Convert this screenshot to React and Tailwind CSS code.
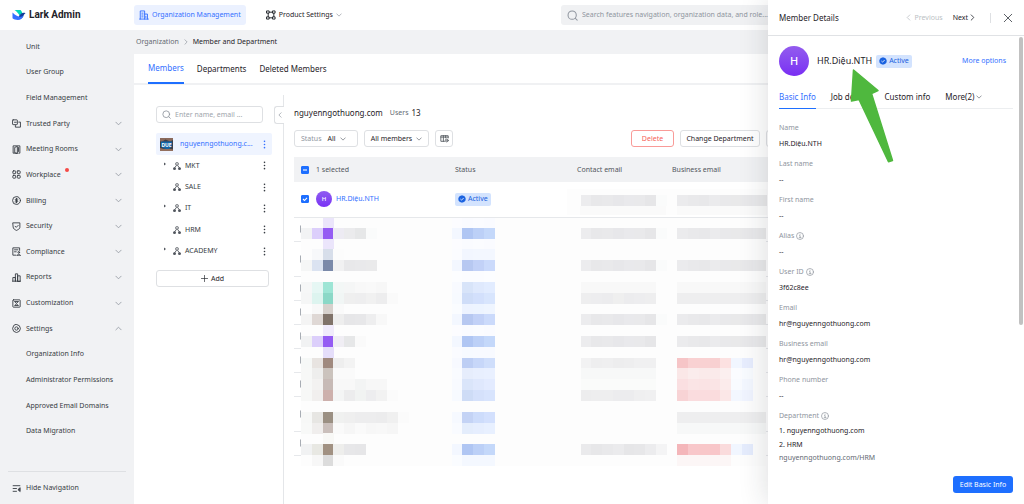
import React from "react";

const font = "font-['Noto_Sans','Liberation_Sans',sans-serif]";

/* ---------- icons ---------- */

function Icon({ children, className = "size-[9px]", width = 1.2 }) {
  return (
    <svg viewBox="0 0 16 16" fill="none" stroke="currentColor" strokeWidth={width} strokeLinecap="round" strokeLinejoin="round" className={"shrink-0 " + className} aria-hidden="true">
      {children}
    </svg>
  );
}

const Chevron = ({ up, className = "size-[7px]", width = 1.8 }) => (
  <Icon className={className} width={width}>
    <path d={up ? "M2 11l6-6 6 6" : "M2 5l6 6 6-6"} />
  </Icon>
);

const Side = ({ left, className = "size-[7px]", width = 1.8 }) => (
  <Icon className={className} width={width}>
    <path d={left ? "M11 2L5 8l6 6" : "M5 2l6 6-6 6"} />
  </Icon>
);

const TrustedIcon = () => (
  <Icon width={1.6}>
    <rect x="1" y="1.5" width="8.5" height="8.5" rx="1" />
    <path d="M12 5.5h3v9H6v-3M4.500 5.800h3" />
  </Icon>
);
const RoomsIcon = () => (
  <Icon width={1.6}>
    <path d="M9 14.500H2v-13h12v13h-2M5.500 4l4-1.500v13l-4-1.500zM11.500 4.500v7" />
  </Icon>
);
const WorkplaceIcon = () => (
  <Icon width={1.6}>
    <rect x="1.500" y="1.500" width="5" height="5" rx="1" />
    <rect x="9.500" y="1.500" width="5" height="5" rx="1" />
    <rect x="1.500" y="9.500" width="5" height="5" rx="1" />
    <rect x="9.500" y="9.500" width="5" height="5" rx="1" />
  </Icon>
);
const BillingIcon = () => (
  <Icon width={1.6}>
    <circle cx="8" cy="8" r="7" />
    <path d="M10.500 5.500H7a1.250 1.250 0 000 2.500h2a1.250 1.250 0 010 2.500H5.500M8 4v8" />
  </Icon>
);
const SecurityIcon = () => (
  <Icon width={1.6}>
    <path d="M2 1.500h12v8c0 2.500-3 4-6 5.500-3-1.500-6-3-6-5.500zM5.500 7.500l2 2 3.500-3.500" />
  </Icon>
);
const ComplianceIcon = () => (
  <Icon width={1.6}>
    <path d="M7 14.500H1.500v-13h12V6M4.500 5h6M4.500 8.500h3" />
    <circle cx="12" cy="9.500" r="1.500" />
    <path d="M9 15c0-3 6-3 6 0z" />
  </Icon>
);
const ReportsIcon = () => (
  <Icon width={1.6}>
    <path d="M1.500 14.500V8H6v6.500M6 14.500v-13h4v13M10 14.500V5h4.500v9.500zM1 14.500h14" />
  </Icon>
);
const CustomizationIcon = () => (
  <Icon width={1.6}>
    <rect x="1.500" y="1.500" width="13" height="13" rx="1" />
    <path d="M5 5l3 2.500L11 5M5 4.500h6M5 11.500h6M5.500 11L8 8.500l2.500 2.500" />
  </Icon>
);
const SettingsIcon = () => (
  <Icon width={1.6}>
    <path d="M8 .8l5 2.200 2 5-2 5-5 2.200L3 13 1 8l2-5z" />
    <circle cx="8" cy="8" r="3" />
  </Icon>
);
const OrgBuildingIcon = () => (
  <Icon className="size-[10px]" width={1.5}>
    <path d="M2 14.500v-13h7v13M9 6.500h4.500v8M1 14.500h14M4.500 5h2M4.500 8h2M4.500 11h2M11 10v2" />
  </Icon>
);
const ProductIcon = () => (
  <Icon className="size-[10px]" width={1.5}>
    <path d="M5.500 3.500h5M5.500 12.500h5M3.500 5.500v5M12.500 5.500v5" />
    <rect x="1.500" y="1.500" width="3.500" height="3.500" /><rect x="11" y="1.500" width="3.500" height="3.500" />
    <rect x="1.500" y="11" width="3.500" height="3.500" /><rect x="11" y="11" width="3.500" height="3.500" />
  </Icon>
);
const SearchIcon = ({ className }) => (
  <Icon className={className} width={1.5}>
    <circle cx="7.500" cy="7.500" r="6" />
    <path d="M12 12l2.800 2.800" />
  </Icon>
);
const TreeIcon = () => (
  <svg viewBox="0 0 16 16" className="size-[8px] shrink-0 text-[#51565d]" fill="none" stroke="currentColor" strokeWidth="1.800" aria-hidden="true">
    <rect x="5.500" y="1.500" width="5" height="4.500" rx="1" />
    <path d="M7 6.500l-3.500 5M9 6.500l3.500 5" />
    <rect x="1" y="11.500" width="4" height="3.500" rx="1" fill="currentColor" />
    <rect x="11" y="11.500" width="4" height="3.500" rx="1" fill="currentColor" />
  </svg>
);
const DotsIcon = () => (
  <svg viewBox="0 0 4 12" className="h-[9px] w-[3px]" fill="currentColor" aria-hidden="true">
    <circle cx="2" cy="1.800" r="1.100" /><circle cx="2" cy="6" r="1.100" /><circle cx="2" cy="10.200" r="1.100" />
  </svg>
);
const InfoIcon = () => (
  <Icon className="size-[8px]" width={1.400}>
    <circle cx="8" cy="8" r="7" />
    <path d="M7 7.200h1.300V11M6.500 11.300h3.500M8 4.500v.2" />
  </Icon>
);
const LarkLogo = () => (
  <svg viewBox="0 0 28 24" className="h-[12px] w-[14px] shrink-0" aria-hidden="true">
    <path d="M5 2h12c2 2 3.500 4.500 4 7l-6 4C13 9 9 4.500 5 2z" fill="#00d6b9" />
    <path d="M27 8.500c-4-2-8-.5-11 3l-3 3.500 6 4c3-2 4-6 5.500-8.500z" fill="#133c9a" />
    <path d="M1 7c5 5 11 9 17 8.500 2-.2 4-1 5.500-2.500-2 5-6 9-12 9-4 0-8-1.500-10.500-3.500z" fill="#3370ff" />
  </svg>
);

/* ---------- navigation ---------- */

const navItems = [
  { label: "Unit" },
  { label: "User Group" },
  { label: "Field Management" },
  { label: "Trusted Party", icon: TrustedIcon },
  { label: "Meeting Rooms", icon: RoomsIcon },
  { label: "Workplace", icon: WorkplaceIcon, dot: true },
  { label: "Billing", icon: BillingIcon },
  { label: "Security", icon: SecurityIcon },
  { label: "Compliance", icon: ComplianceIcon },
  { label: "Reports", icon: ReportsIcon },
  { label: "Customization", icon: CustomizationIcon },
  { label: "Settings", icon: SettingsIcon, open: true },
  { label: "Organization Info" },
  { label: "Administrator Permissions" },
  { label: "Approved Email Domains" },
  { label: "Data Migration" },
];

function Sidebar() {
  return (
    <aside className="flex w-[134px] shrink-0 flex-col bg-[#f1f2f4] text-[#373c43]">
      <nav className="flex flex-1 flex-col pt-1 pb-[27px]">
        {navItems.map(({ label, icon: I, dot, open }) =>
          I ? (
            <button key={label} type="button" aria-expanded={!!open} className="flex max-h-[26px] flex-1 items-center gap-[5px] pr-3 pl-3 text-left">
              <I />
              <span className="relative">
                {label}
                {dot && <i className="absolute -top-px -right-[8px] size-[4px] rounded-full bg-[#f54a45]" />}
              </span>
              <span className="ml-auto text-[#8f959e]"><Chevron up={open} /></span>
            </button>
          ) : (
            <a key={label} href="#" className="flex max-h-[26px] flex-1 items-center pl-[26px]">{label}</a>
          )
        )}
      </nav>
      <div className="mx-2 border-t border-[#dee0e3]" />
      <button type="button" className="flex h-8 items-center gap-[5px] pl-3 text-left">
        <Icon width={1.600}><path d="M2 3h12M2 8h6M2 13h6" /><path d="M14 7l-3.500 3 3.500 3z" fill="currentColor" /></Icon>
        Hide Navigation
      </button>
    </aside>
  );
}

function TopBar() {
  return (
    <header className="flex h-[30px] shrink-0 items-center bg-white">
      <a href="#" className="flex w-[134px] shrink-0 items-center gap-[3px] pl-3 font-['Roboto','Liberation_Sans',sans-serif] text-[10px] font-bold text-[#1f2329]">
        <LarkLogo />
        Lark Admin
      </a>
      <button type="button" className="flex h-5 items-center gap-[3px] rounded-[3px] bg-[#ebf1ff] px-[5px] text-[#3370ff]">
        <OrgBuildingIcon />
        Organization Management
      </button>
      <button type="button" className="ml-5 flex items-center gap-[3px] text-[#1f2329]">
        <ProductIcon />
        Product Settings
        <span className="text-[#8f959e]"><Chevron className="size-[6px]" /></span>
      </button>
      <label className="ml-auto flex h-5 w-[300px] items-center gap-1 rounded-[3px] bg-[#f0f1f3] px-[6px] text-[#8f959e] mr-[163px]">
        <SearchIcon className="size-[11px]" />
        <input aria-label="Search" className="w-full bg-transparent outline-none placeholder:text-[#8f959e]" placeholder="Search features navigation, organization data, and role..." />
      </label>
    </header>
  );
}

/* ---------- department tree ---------- */

const departments = [
  { name: "MKT", nested: true },
  { name: "SALE" },
  { name: "IT", nested: true },
  { name: "HRM" },
  { name: "ACADEMY", nested: true },
];

function DepartmentTree() {
  return (
    <section className="relative mt-[10px] w-[150px] shrink-0 border-r border-[#e4e6e9] pt-[11px] pr-[11px] pl-[22px]">
      <label className="mr-[9px] flex h-[17px] items-center gap-1 rounded-[3px] border border-[#dee0e3] px-[5px] text-[#8f959e]">
        <SearchIcon className="size-[9px]" />
        <input aria-label="Search departments" className="w-full bg-transparent outline-none placeholder:text-[#a0a5ac]" placeholder="Enter name, email ..." />
      </label>
      <button type="button" aria-label="Collapse" className="absolute top-[11px] -right-px flex h-[18px] w-[10px] items-center justify-center rounded-l-[3px] border border-r-0 border-[#dee0e3] bg-white text-[#8f959e]">
        <Side left className="size-[6px]" />
      </button>
      <div className="mt-[10px] flex h-[22px] items-center rounded-[2px] bg-[#eff4ff] px-1 text-[#3370ff]">
        <svg viewBox="0 0 26 26" className="size-[13px] shrink-0" aria-hidden="true">
          <rect width="26" height="26" rx="2" fill="#3c3f4a" />
          <path d="M0 0h26v4l-6 3-9-4-8 5-3-2z" fill="#8a6a5c" />
          <path d="M0 20l8 2 9-1 9 2v3H0z" fill="#93705f" />
          <path d="M2 7h22v9c-3 5-6 6-11 6S5 20 2 16z" fill="#1265a8" />
          <text x="13" y="17" textAnchor="middle" fontSize="10" fontWeight="700" fill="#fff">DUE</text>
        </svg>
        <a href="#" className="ml-[7px]">nguyenngothuong.c...</a>
        <button type="button" aria-label="More" className="ml-auto pr-[2px]"><DotsIcon /></button>
      </div>
      <ul className="grid h-[107px] grid-rows-5">
        {departments.map((d) => (
          <li key={d.name} className="flex items-center pr-[6px] pl-2 text-[#373c43]">
            <svg viewBox="0 0 6 8" className="mb-1 h-[4px] w-[3px]" aria-hidden="true">
              {d.nested && <path d="M0 1l4 3-4 3z" fill="#51565d" />}
            </svg>
            <span className="ml-[6px] flex items-center gap-1"><TreeIcon />{d.name}</span>
            <button type="button" aria-label={d.name + " menu"} className="ml-auto"><DotsIcon /></button>
          </li>
        ))}
      </ul>
      <button type="button" className="mt-2 flex h-[17px] w-[113px] items-center justify-center gap-[3px] rounded-[3px] border border-[#dee0e3] text-[#1f2329]">
        <Icon className="size-[7px]" width={1.500}><path d="M8 1v14M1 8h14" /></Icon>
        Add
      </button>
    </section>
  );
}

/* ---------- member table ---------- */

const CELL = 10.75;
const LINE = 10.82;

const g = (n, c) => Array(n).fill(c);
const mail = ["#ececee", "#e8e8ea", "#e9e9eb", "#e7e7ea", "#e9e9ec", "#e9e9eb", "#e6e6e8", "#fafbfb"];
const mail2 = ["#ebebed", "#e9e9eb", "#e8e8ea", "#ebebed", "#e9e9eb", "#e9e9ea", "#e8e8ea", "#e9e9eb", "#e9e9ea"];
const blue = ["#f3f7ff", "#b0c6f3", "#bcd0f7", "#c4d8fa"];
const lavender = ["#f3f7ff", "#b7c8f1", "#c2d1f7", "#cbdafb"];
const paleBlue = ["#f8faff", "#d8e4f9", "#dfe9fd", "#e2ecff"];
const faint = ["#fbfcff", "#f2f6ff", "#f3f7ff", "#f3f7ff"];

/* [line, first column, colours] */
const mosaic = [
  [0, 2, ["#ebe5fb"]], [0, 14, ["#fcfcff", "#fafbff", "#fbfcff", "#fafbff"]],
  [1, 0, ["#f2f3f4", "#dccffb", "#955cf3", "#edebf3", "#ebebed", "#e6e7e8", "#fafbfb"]], [1, 14, blue], [1, 26, mail], [1, 35, mail2],
  [2, 2, ["#ebe5fb"]], [2, 14, ["#fcfcff", "#fafbff", "#fbfcff", "#fafbff"]],
  [3, 1, ["#f7f8fa", "#d7deea", "#fcfcfc"]], [3, 14, faint],
  [4, 0, ["#f5f6f6", "#dbe3f1", "#7a89a9", "#f1f1f2", "#e8e8ea", "#e9e9eb", "#eaeaeb"]], [4, 14, lavender], [4, 26, mail], [4, 35, mail2],
  [5, 14, ["#fcfdff", "#fbfcff", "#fbfcff", "#fcfdff"]],
  [6, 0, ["#f6f7f7", "#e6f7f4", "#9de5d5", "#f3f7f6", "#f5f6f6", "#f8f8f8", "#f9f9f9", "#f7f7f7"]], [6, 14, paleBlue], [6, 26, g(7, "#f8f8f8")], [6, 35, g(9, "#f8f8f8")],
  [7, 0, ["#f5f6f6", "#ddf4ef", "#8bd8c7", "#f1f6f5", "#efefef", "#eeeeef", "#f1f1f1", "#ededee", "#fafafa"]], [7, 14, ["#f7faff", "#cfddf8", "#d3e0fc", "#d8e5fd"]], [7, 26, ["#eeeeef", "#ededef", "#ececee", "#efefef", "#ececee", "#ededef", "#eeeeef"]], [7, 35, g(9, "#eeeeef")],
  [8, 1, ["#f8f8f8", "#d7d1cd", "#fafafa"]], [8, 14, ["#fafcff", "#edf3ff", "#edf4ff", "#eff5ff"]],
  [9, 0, ["#f4f4f4", "#dfd8d5", "#80736a", "#eeeeee", "#e6e6e8", "#e7e7e9", "#eeeeef", "#f8f8f8"]], [9, 14, lavender], [9, 26, mail], [9, 35, mail2],
  [10, 2, ["#f0ebfb"]], [10, 14, ["#fcfcff", "#fafbff", "#fbfcff", "#fafbff"]],
  [11, 0, ["#f1f2f3", "#dccffb", "#955cf3", "#f0eef4", "#e6e7e8", "#fafafa"]], [11, 14, blue], [11, 26, mail.slice(0, 7)], [11, 35, mail2],
  [12, 2, ["#e5defa"]], [12, 14, ["#fafbff", "#f7faff", "#f8faff", "#f8faff"]],
  [13, 0, ["#f6f8f7", "#e8e4e1", "#a08a7f", "#eeeeee", "#f3f3f3"]], [13, 14, ["#f7f9ff", "#bdcef4", "#c7d7f9", "#cfdefb"]], [13, 26, ["#f2f2f3", "#eeeeef", "#efeff0", "#ededee", "#eeeeef", "#f0f0f1", "#f0f0f1"]], [13, 35, ["#f6c5c7", "#f9d1d2", "#f9d1d2", "#f8d0d1", "#fce1e1", "#f1f6ff", "#e7edfe"]],
  [14, 0, ["#f7f8f7", "#eeeeed", "#cbc3bd", "#fafafa", "#fafafa"]], [14, 14, ["#f9fbff", "#e6edfc", "#e8effe", "#e9f0ff"]], [14, 26, g(7, "#f7f8f8")], [14, 35, ["#fae7e7", "#faecec", "#faeaea", "#faeaea", "#fbefef", "#fbfcff", "#f8fbff"]],
  [15, 0, ["#f7f8f7", "#f3f2f1", "#c7bab6", "#f8f8f8", "#f8f8f8", "#f3f4f4", "#f7f7f7", "#f7f7f7"]], [15, 14, ["#f8faff", "#dae5fa", "#dfe8fd", "#e3ebff"]], [15, 26, g(7, "#fafbfa")], [15, 35, ["#fadfe1", "#fae4e5", "#fae3e4", "#fae4e5", "#fbebeb", "#f9fbff", "#f3f7ff"]],
  [16, 0, ["#f7f8f7", "#f1efee", "#cdb0ac", "#f4f5f5", "#ececed", "#f1f3f2", "#ededef", "#f2f2f2", "#fbfbfb"]], [16, 14, ["#f7faff", "#cedcf6", "#d5e1fb", "#d8e4fd"]], [16, 26, ["#ededee", "#eeeeef", "#eeeeef", "#ececee", "#ececee", "#efeff0", "#f0f0f1"]], [16, 35, ["#f8d3d5", "#fadcde", "#fadcde", "#fadcdd", "#fbe7e7", "#f3f7ff", "#f0f4ff"]],
  [18, 0, ["#f7f8f7", "#e7e6e3", "#9b9083", "#f0f1f0", "#efefef", "#ededee", "#ededee", "#ececed", "#f0f0f0", "#fbfbfb"]], [18, 14, ["#f6f9ff", "#c4d3f5", "#cddcfb", "#d3e0fd"]], [18, 35, g(9, "#eeeeef")],
  [19, 0, ["#f8f9f8", "#f0eeed", "#cabfbb", "#fafafa", "#f6f6f6", "#fafafa", "#f7f7f7", "#f8f8f8", "#f6f6f6"]], [19, 14, ["#f9fbff", "#e4edfc", "#e6eefe", "#e8f0ff"]], [19, 35, g(9, "#f7f8f8")],
  [20, 2, ["#f8f8f6"]],
  [21, 0, ["#f1f2f3", "#e8e8e3", "#a19182", "#eeeeec", "#e7e7e9", "#e6e6e8"]], [21, 14, blue], [21, 26, ["#eaeaec", "#e7e7e9", "#e9e9eb", "#ebebed", "#e6e6e8", "#e7e7e9", "#ececee", "#f4f4f5"]], [21, 35, ["#f4b6ba", "#f8c7ca", "#f8c7c9", "#f8c6c9", "#fadbdc", "#f1f6ff", "#e5ecfd"]],
  [22, 1, ["#f7f7f7", "#dcdcdc", "#fafafa"]], [22, 14, ["#fafcff", "#f4f8ff", "#f4f8ff", "#f4f8ff"]], [22, 35, g(5, "#fcf6f6")],
];

function Mosaic() {
  return (
    <svg viewBox="0 1 465 248" width="465" height="248" className="absolute top-[61px] left-[7px]" shapeRendering="crispEdges" aria-hidden="true">
      <rect width="465" height="249" fill="#fdfdfd" />
      {mosaic.map(([line, col, colours]) =>
        colours.map((c, i) => (
          <rect key={line + "-" + (col + i)} x={(col + i) * CELL} y={line * LINE} width={CELL + 0.300} height={LINE + 0.200} fill={c} />
        ))
      )}
    </svg>
  );
}

function MailMosaic() {
  return (
    <svg viewBox="0 0 200 26" width="200" height="26" className="absolute top-[32px] left-[273px]" shapeRendering="crispEdges" aria-hidden="true">
      <rect width="200" height="26" fill="#fdfdfd" />
      {mail.map((c, i) => <rect key={i} x={13.500 + i * CELL} y="6" width="11" height="11" fill={c} />)}
      {mail2.map((c, i) => <rect key={i} x={110 + i * CELL} y="6" width="11" height="11" fill={c} />)}
      <path d="M13 17h86v9H13zM110 17h90v9h-90z" fill="#fafafa" />
    </svg>
  );
}

function Check({ label, mode }) {
  return (
    <span className="relative block size-[8px]">
      <input
        type="checkbox"
        aria-label={label}
        defaultChecked={!!mode}
        className="block size-[8px] appearance-none rounded-[1px] border border-[#a8adb4] bg-white checked:border-[#1e6fff] checked:bg-[#1e6fff]"
      />
      {mode && (
        <svg viewBox="0 0 8 8" className="pointer-events-none absolute inset-0 size-[8px]" fill="none" stroke="#fff" strokeWidth="1.100" aria-hidden="true">
          <path d={mode === "some" ? "M2 4h4" : "M2 4l1.500 1.500L6 2.800"} />
        </svg>
      )}
    </span>
  );
}

function ActiveBadge() {
  return (
    <span className="inline-flex h-[13px] items-center gap-[2px] rounded-[2px] bg-[#d3e3fe] px-[3px] text-[#1a62e0]">
      <svg viewBox="0 0 16 16" className="size-[8px] shrink-0" aria-hidden="true">
        <path d="M8 .5l2.200 1.200 2.500.1 1 2.300 1.800 1.900-.5 2 .5 2.400-1.900 1.600-1 2.200-2.500.1L8 15.500l-2.200-1.200-2.500-.1-1-2.200L.5 10.400 1 8 .5 6l1.800-1.900 1-2.300 2.500-.1z" fill="#1a62e0" />
        <path d="M4.800 8l2.300 2.300 4.200-4.300" fill="none" stroke="#fff" strokeWidth="1.600" />
      </svg>
      Active
    </span>
  );
}

const hiddenRows = ["h-6", "h-[35px]", "h-6", "h-6", "h-6", "h-6", "h-6", "h-[35px]", "h-6"];

function MemberTable() {
  return (
    <div className="relative mt-[10px]">
      <table className="w-full table-fixed border-collapse">
        <colgroup>
          <col className="w-[22px]" /><col className="w-[139px]" /><col className="w-[122px]" /><col className="w-[95px]" /><col className="w-[94px]" /><col />
        </colgroup>
        <thead>
          <tr className="h-[25px] bg-[#f1f2f4] text-left text-[#51565d]">
            <th className="p-0 pl-[7px] font-normal"><Check label="Select all" mode="some" /></th>
            <th className="p-0 font-normal">1 selected</th>
            <th className="p-0 font-normal">Status</th>
            <th className="p-0 font-normal">Contact email</th>
            <th className="p-0 font-normal">Business email</th>
            <th className="p-0 font-normal" />
          </tr>
        </thead>
        <tbody>
          <tr className="h-[35px] border-b border-[#e6e8eb]">
            <td className="p-0 pl-[7px]"><Check label="Select HR.Diệu.NTH" mode="all" /></td>
            <td className="p-0">
              <a href="#" className="flex items-center gap-1 text-[#3370ff]">
                <span className="flex size-4 items-center justify-center rounded-full bg-linear-to-b from-[#8f5bf0] to-[#7a2ff5] text-[6px] font-medium text-white">H</span>
                HR.Diệu.NTH
              </a>
            </td>
            <td className="p-0"><div className="flex"><ActiveBadge /></div></td>
            <td /><td /><td />
          </tr>
          {hiddenRows.map((h, i) => (
            <tr key={i} className={h + " border-b border-[#e6e8eb]"}>
              <td className="p-0 pl-[6px]"><Check label={"Select member " + (i + 2)} /></td>
              <td className="p-0" /><td className="p-0" /><td className="p-0" /><td className="p-0" /><td className="p-0" />
            </tr>
          ))}
        </tbody>
      </table>
      <MailMosaic />
      <Mosaic />
    </div>
  );
}

const outline = "flex h-[17px] items-center rounded-[3px] border border-[#dee0e3] bg-white";

function Members() {
  return (
    <section className="min-w-0 flex-1 pt-[22px] pl-[10px]">
      <div className="flex h-3 items-center">
        <h1 className="text-[8px] text-[#1f2329]">nguyenngothuong.com</h1>
        <span className="ml-[7px] text-[#646a73]">Users</span>
        <span className="ml-[3px] text-[8px] text-[#1f2329]">13</span>
      </div>
      <div className="mt-[11px] flex items-center gap-[6px] whitespace-nowrap text-[#1f2329]">
        <button type="button" className={outline + " w-[64px] px-[6px]"}>
          <span className="text-[#8f959e]">Status</span>
          <span className="mr-1 ml-[6px]">All</span>
          <Chevron className="size-[6px] text-[#646a73]" />
        </button>
        <button type="button" className={outline + " w-[65px] justify-center gap-1"}>
          All members
          <Chevron className="size-[6px] text-[#646a73]" />
        </button>
        <button type="button" aria-label="Columns" className={outline + " w-[18px] justify-center text-[#51565d]"}>
          <Icon className="size-[9px]" width={1.500}>
            <path d="M8 13H1.500V3h13v4M1.500 5.500h13M6 3v10M10 3v4" />
            <circle cx="12" cy="11.500" r="2.500" /><path d="M12 11.500h.1" />
          </Icon>
        </button>
        <button type="button" className="ml-auto flex h-[17px] w-[43px] items-center justify-center rounded-[3px] border border-[#f99b98] bg-white text-[#f65f5a]">Delete</button>
        <button type="button" className={outline + " w-[80px] justify-center"}>Change Department</button>
        <button type="button" aria-label="More actions" className={outline + " mr-[178px] w-[80px] justify-center"} />
      </div>
      <MemberTable />
    </section>
  );
}

/* ---------- member details ---------- */

const fields = [
  { label: "Name", value: "HR.Diệu.NTH" },
  { label: "Last name", value: "--" },
  { label: "First name", value: "--" },
  { label: "Alias", value: "--", info: true },
  { label: "User ID", value: "3f62c8ee", info: true },
  { label: "Email", value: "hr@nguyenngothuong.com" },
  { label: "Business email", value: "hr@nguyenngothuong.com" },
  { label: "Phone number", value: "--" },
];

function Details() {
  return (
    <aside className="absolute inset-y-0 right-0 flex w-[256px] flex-col bg-white text-[#1f2329] shadow-[0_0_28px_rgba(31,35,41,0.16)]">
      <header className="flex h-[36px] shrink-0 items-center border-b border-[#e0e2e5] pr-[11px] pl-[11px]">
        <h2 className="text-[8px]">Member Details</h2>
        <button type="button" disabled className="ml-auto flex items-center gap-[3px] text-[#bbbfc4]"><Side left /> Previous</button>
        <button type="button" className="ml-[10px] flex items-center gap-px">Next <Side /></button>
        <i className="ml-[14px] h-[10px] w-px bg-[#dee0e3]" />
        <button type="button" aria-label="Close" className="ml-3 text-[#51565d]">
          <Icon className="size-[10px]" width={1.500}><path d="M2 2l12 12M14 2L2 14" /></Icon>
        </button>
      </header>
      <div className="min-h-0 flex-1 overflow-hidden px-[11px]">
        <div className="mt-[10px] flex h-[30px] items-center">
          <span className="flex size-[30px] items-center justify-center rounded-full bg-linear-to-b from-[#935bee] to-[#7a2cf3] text-[11px] font-medium text-white">H</span>
          <h3 className="mr-1 ml-2 text-[9px]">HR.Diệu.NTH</h3>
          <ActiveBadge />
          <a href="#" className="mr-[7px] ml-auto text-[#3370ff]">More options</a>
        </div>
        <div role="tablist" className="mt-[10px] flex h-[23px] items-stretch gap-[15px] border-b border-[#eceef0] text-[8px] whitespace-nowrap">
          <button type="button" role="tab" aria-selected="true" className="-mb-px border-b border-[#1e6fff] text-[#3370ff]">Basic Info</button>
          <button type="button" role="tab" aria-selected="false">Job details</button>
          <button type="button" role="tab" aria-selected="false">Custom info</button>
          <button type="button" role="tab" aria-selected="false" className="flex items-center gap-[2px]">More(2) <Chevron className="size-[6px] text-[#646a73]" /></button>
        </div>
        <dl className="mt-[11px]">
          {fields.map((f) => (
            <div key={f.label} className="h-9">
              <dt className="flex h-4 items-center gap-[2px] text-[#8f959e]">{f.label}{f.info && <InfoIcon />}</dt>
              <dd className="h-4 leading-4">{f.value}</dd>
            </div>
          ))}
          <div>
            <dt className="flex h-4 items-center gap-[2px] text-[#8f959e]">Department<InfoIcon /></dt>
            <dd className="leading-[14px]">
              <div>1. nguyenngothuong.com</div>
              <div>2. HRM</div>
              <div className="leading-3 text-[#646a73]">nguyenngothuong.com/HRM</div>
            </dd>
          </div>
        </dl>
      </div>
      <footer className="flex shrink-0 justify-end pr-[11px] pb-[11px]">
        <button type="button" className="h-[17px] w-[60px] rounded-[3px] bg-[#1e6fff] text-white">Edit Basic Info</button>
      </footer>
      <i className="absolute top-[37px] right-px h-[288px] w-[4px] rounded-[2px] bg-[#c1c1c1]" />
      <svg viewBox="0 0 44 96" className="pointer-events-none absolute top-[68px] left-[82px] h-[96px] w-[44px]" aria-hidden="true">
        <path d="M3.500 2l24.500 20.500-6.500 3 21 67-4 1.200L9 31.500l-7.500 1.500z" fill="#4fb83e" stroke="#4fb83e" strokeWidth="1.500" strokeLinejoin="round" />
      </svg>
    </aside>
  );
}

/* ---------- page ---------- */

export default function App() {
  return (
    <div className={font + " relative flex h-screen flex-col overflow-hidden bg-white text-[7px] leading-[12px]"}>
      <TopBar />
      <div className="flex min-h-0 flex-1">
        <Sidebar />
        <main className="flex min-w-0 flex-1 flex-col">
          <div className="flex h-6 shrink-0 items-center gap-1 bg-[#f1f2f4] pl-[2px]">
            <a href="#" className="text-[#646a73]">Organization</a>
            <Side className="size-[6px] text-[#8f959e]" />
            <span className="text-[#1f2329]">Member and Department</span>
          </div>
          <div role="tablist" className="flex h-[31px] shrink-0 items-stretch gap-[13px] border-b-2 border-[#f0f1f3] pl-[14px] text-[8px] text-[#1f2329]">
            <button type="button" role="tab" aria-selected="true" className="-mb-px border-b-2 border-[#1e6fff] text-[#3370ff]">Members</button>
            <button type="button" role="tab" aria-selected="false">Departments</button>
            <button type="button" role="tab" aria-selected="false">Deleted Members</button>
          </div>
          <div className="flex min-h-0 flex-1">
            <DepartmentTree />
            <Members />
          </div>
        </main>
      </div>
      <Details />
    </div>
  );
}
